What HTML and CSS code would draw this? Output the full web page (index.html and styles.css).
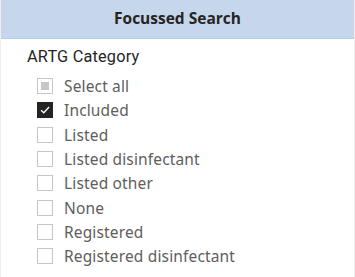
FILE: index.html
```html
<!DOCTYPE html>
<html>
<head>
<meta charset="utf-8">
<link rel="stylesheet" href="styles.css">
</head>
<body>
<div class="panel">
  <div class="header">Focussed Search</div>
  <div class="body">
    <div class="title">ARTG Category</div>
    <ul class="list">
      <li class="item"><span class="box partial"><span class="fill"></span></span><span class="label">Select all</span></li>
      <li class="item"><span class="box checked"><svg viewBox="0 0 16 16" width="16" height="16"><path d="M3.5 8.3 L6.6 11.2 L12.6 4.6" fill="none" stroke="#fff" stroke-width="1.5"/></svg></span><span class="label">Included</span></li>
      <li class="item"><span class="box"></span><span class="label">Listed</span></li>
      <li class="item"><span class="box"></span><span class="label">Listed disinfectant</span></li>
      <li class="item"><span class="box"></span><span class="label">Listed other</span></li>
      <li class="item"><span class="box"></span><span class="label">None</span></li>
      <li class="item"><span class="box"></span><span class="label">Registered</span></li>
      <li class="item"><span class="box"></span><span class="label">Registered disinfectant</span></li>
    </ul>
  </div>
</div>
</body>
</html>
```
FILE: styles.css
```css
html, body {
  margin: 0;
  padding: 0;
  background: #ffffff;
}
.panel {
  width: 355px;
  height: 277px;
  overflow: hidden;
  box-sizing: border-box;
  border-left: 1px solid #eeeeee;
  border-right: 1px solid #eeeeee;
}
.header {
  height: 39px;
  box-sizing: border-box;
  background: #c6d6eb;
  border-bottom: 1px solid #b9cbe3;
  font-family: "Open Sans", sans-serif;
  font-weight: 700;
  font-size: 15.5px;
  color: #252423;
  display: flex;
  align-items: center;
  justify-content: center;
  padding-bottom: 2px;
}
.body {
  padding: 7px 0 0 26px;
}
.title {
  font-family: Roboto, sans-serif;
  font-size: 16.3px;
  color: #252423;
  line-height: 22px;
  letter-spacing: 0.2px;
}
.list {
  list-style: none;
  margin: 6px 0 0 0;
  padding: 0 0 0 10px;
}
.item {
  display: flex;
  align-items: center;
  height: 24.3px;
}
.box {
  width: 16px;
  height: 16px;
  box-sizing: border-box;
  border: 1px solid #c8c6c4;
  background: #fff;
  margin-right: 11px;
  display: flex;
  align-items: center;
  justify-content: center;
  flex: none;
}
.box.partial .fill {
  width: 8px;
  height: 8px;
  background: #c8c6c4;
}
.box.checked {
  background: #252423;
  border-color: #252423;
}
.box.checked svg {
  display: block;
}
.label {
  font-family: "Noto Sans", sans-serif;
  font-size: 15.5px;
  letter-spacing: 0.15px;
  color: #605e5c;
  white-space: nowrap;
}
```
